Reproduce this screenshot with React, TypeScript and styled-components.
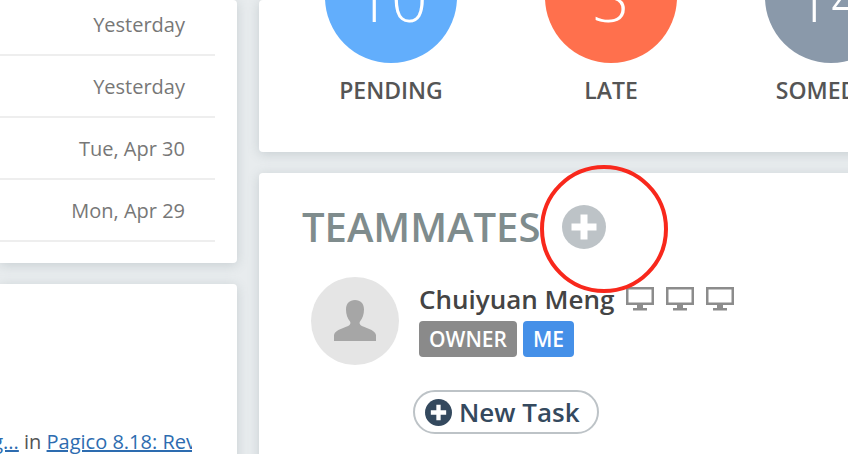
import { createGlobalStyle, styled } from 'styled-components';

const GlobalStyle = createGlobalStyle`
  html, body {
    margin: 0;
    padding: 0;
    background: #e8ecee;
    font-family: "Open Sans", "Noto Sans", sans-serif;
  }
`;

const Page = styled.div`
  position: relative;
  display: grid;
  grid-template-columns: 237px 700px;
  column-gap: 22px;
  width: 848px;
  height: 454px;
  overflow: hidden;
  background: #e8ecee;
`;

const Column = styled.div`
  display: flex;
  flex-direction: column;
  gap: 21px;
`;

const Card = styled.section<{ $height: number }>`
  height: ${(p) => p.$height}px;
  flex: none;
  background: #fff;
  border-radius: 0 4px 4px 0;
  box-shadow: 0 2px 12px rgba(80, 100, 110, 0.22);
  overflow: hidden;
`;

const RightCard = styled(Card)`
  border-radius: 4px 0 0 4px;
`;

const DateList = styled.ul`
  list-style: none;
  margin: 0;
  padding: 0 22px 0 0;
`;

const DateRow = styled.li<{ $first?: boolean }>`
  height: ${(p) => (p.$first ? 54 : 60)}px;
  padding-right: 30px;
  border-bottom: 2px solid #eeeeee;
  color: #777;
  font-size: 20px;
  line-height: ${(p) => (p.$first ? 49 : 62)}px;
  text-align: right;
`;

const ActivityLine = styled.div`
  width: 192px;
  margin-top: 142px;
  overflow: hidden;
  font-size: 20px;
  line-height: 32px;
  color: #555;
  white-space: nowrap;
`;

const ActivityText = styled.span`
  display: inline-block;
  margin-left: -64px;
`;

const Link = styled.a`
  color: #2d6cb0;
  text-decoration: underline;
`;

const StatRow = styled.div`
  display: flex;
  gap: 88px;
  margin-top: -69px;
  padding-left: 66px;
`;

const Stat = styled.div`
  display: flex;
  flex: none;
  flex-direction: column;
  align-items: center;
  width: 132px;
`;

const StatCircle = styled.div<{ $color: string }>`
  display: flex;
  align-items: center;
  justify-content: center;
  width: 132px;
  height: 132px;
  border-radius: 50%;
  background: ${(p) => p.$color};
  color: #fff;
  font-size: 64px;
  font-weight: 300;
`;

const StatLabel = styled.div`
  margin-top: 10px;
  color: #555;
  font-size: 23px;
  font-weight: 600;
  line-height: 34px;
  white-space: nowrap;
`;

const Heading = styled.div`
  display: flex;
  align-items: center;
  gap: 22px;
  margin: 28px 0 0 43px;
`;

const HeadingText = styled.h2`
  margin: 0;
  color: #7f8c8d;
  font-size: 40px;
  font-weight: 600;
  line-height: 52px;
`;

const AddCircle = styled.span`
  display: flex;
  width: 44px;
  height: 44px;
  color: #bdc3c7;
`;

const Member = styled.div`
  display: flex;
  gap: 20px;
  margin: 24px 0 0 52px;
`;

const Avatar = styled.div`
  display: flex;
  flex: none;
  align-items: center;
  justify-content: center;
  width: 88px;
  height: 88px;
  border-radius: 50%;
  background: #e5e5e5;
`;

const MemberInfo = styled.div`
  display: flex;
  flex-direction: column;
`;

const NameRow = styled.div`
  display: flex;
  align-items: center;
  gap: 12px;
  height: 44px;
`;

const Name = styled.span`
  color: #444;
  font-size: 26px;
  font-weight: 600;
  white-space: nowrap;
`;

const Devices = styled.span`
  display: flex;
  gap: 12px;
  color: #8c8c8c;
`;

const Badges = styled.div`
  display: flex;
  gap: 6px;
`;

const Badge = styled.span<{ $color: string }>`
  height: 36px;
  padding: 0 10px;
  border-radius: 4px;
  background: ${(p) => p.$color};
  color: #fff;
  font-size: 21px;
  font-weight: 600;
  line-height: 36px;
`;

const NewTaskButton = styled.button`
  display: flex;
  align-items: center;
  gap: 7px;
  width: 186px;
  height: 44px;
  margin: 25px 0 0 154px;
  padding: 0 0 0 10px;
  border: 2px solid #bdc3c7;
  border-radius: 22px;
  background: #fff;
  color: #34495e;
  font-family: inherit;
  font-size: 26px;
  font-weight: 600;
`;

const Annotation = styled.div`
  position: absolute;
  left: 540px;
  top: 165px;
  box-sizing: border-box;
  width: 128px;
  height: 128px;
  border: 4px solid #f8281c;
  border-radius: 50%;
`;

function PlusCircle({ size }: { size: number }) {
  return (
    <svg width={size} height={size} viewBox="0 0 44 44" fill="none">
      <circle cx="22" cy="22" r="22" fill="currentColor" />
      <path d="M22 9.5v25M9.5 22h25" stroke="#fff" strokeWidth="7" />
    </svg>
  );
}

function Monitor() {
  return (
    <svg width="28" height="24" viewBox="0 0 28 24" fill="currentColor">
      <path d="M0 0h28v18H0zM2.5 2.5v13h23v-13z" fillRule="evenodd" />
      <path d="M11 18h6v3h-6zM7 21h14v2.5H7z" />
    </svg>
  );
}

function Person() {
  return (
    <svg width="42" height="42" viewBox="0 0 42 42" fill="#a6a6a6">
      <path d="M21 0c5.500 0 9 3.500 9 9.500 0 5-1.500 9-4 12-.8 1-.5 3 1 4 3 2 14 4 15 9.500V41H0v-6c1-5.500 12-7.500 15-9.500 1.500-1 1.800-3 1-4-2.500-3-4-7-4-12C12 3.500 15.500 0 21 0z" />
    </svg>
  );
}

const dates = ['Yesterday', 'Yesterday', 'Tue, Apr 30', 'Mon, Apr 29'];

const stats = [
  { value: '10', label: 'PENDING', color: '#62aefc' },
  { value: '3', label: 'LATE', color: '#ff704d' },
  { value: '14', label: 'SOMEDAY', color: '#8a99aa' },
];

function App() {
  return (
    <>
      <GlobalStyle />
      <Page>
        <Column>
          <Card $height={263}>
            <DateList>
              {dates.map((date, i) => (
                <DateRow key={i} $first={i === 0}>
                  {date}
                </DateRow>
              ))}
            </DateList>
          </Card>
          <Card $height={200}>
            <ActivityLine>
              <ActivityText>
                <Link href="#">Testing...</Link> in <Link href="#">Pagico 8.18: Review</Link>
              </ActivityText>
            </ActivityLine>
          </Card>
        </Column>
        <Column>
          <RightCard $height={152}>
            <StatRow>
              {stats.map((stat) => (
                <Stat key={stat.label}>
                  <StatCircle $color={stat.color}>{stat.value}</StatCircle>
                  <StatLabel>{stat.label}</StatLabel>
                </Stat>
              ))}
            </StatRow>
          </RightCard>
          <RightCard $height={300}>
            <Heading>
              <HeadingText>TEAMMATES</HeadingText>
              <AddCircle>
                <PlusCircle size={44} />
              </AddCircle>
            </Heading>
            <Member>
              <Avatar>
                <Person />
              </Avatar>
              <MemberInfo>
                <NameRow>
                  <Name>Chuiyuan Meng</Name>
                  <Devices>
                    <Monitor />
                    <Monitor />
                    <Monitor />
                  </Devices>
                </NameRow>
                <Badges>
                  <Badge $color="#8a8a8a">OWNER</Badge>
                  <Badge $color="#4590e8">ME</Badge>
                </Badges>
              </MemberInfo>
            </Member>
            <NewTaskButton>
              <PlusCircle size={27} />
              New Task
            </NewTaskButton>
          </RightCard>
        </Column>
        <Annotation />
      </Page>
    </>
  );
}

export default App;
